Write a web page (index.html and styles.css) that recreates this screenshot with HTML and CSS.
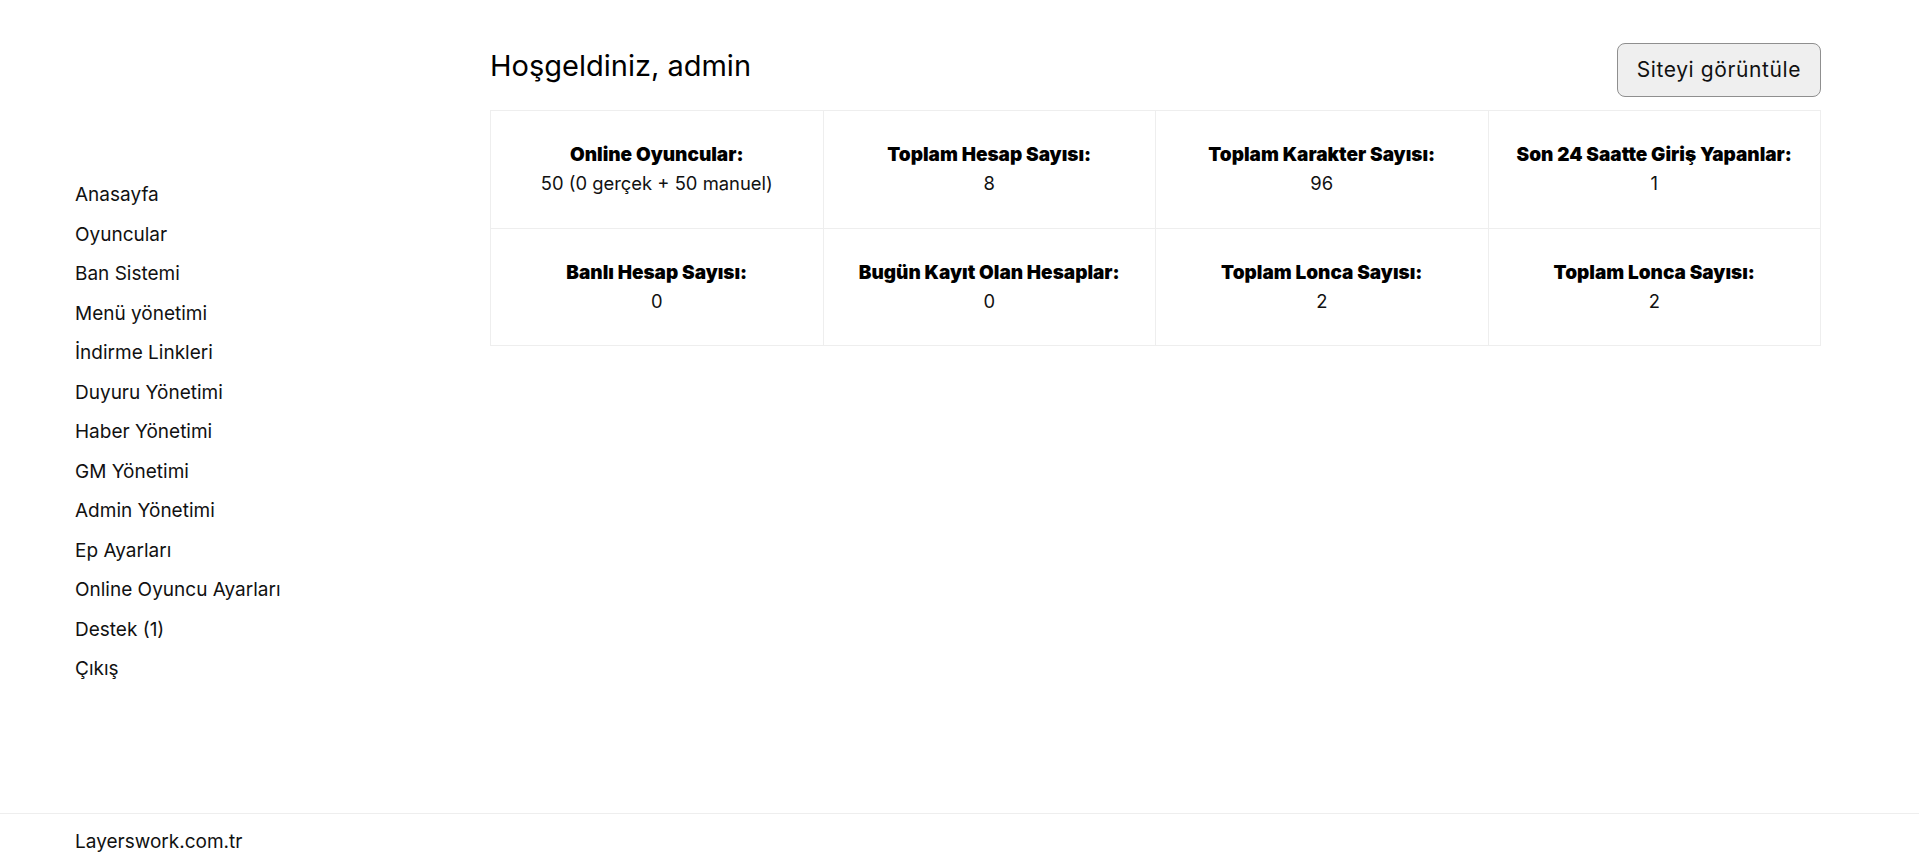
FILE: index.html
```html
<!DOCTYPE html>
<html lang="tr">
<head>
<meta charset="utf-8">
<title>Admin Panel</title>
<link rel="stylesheet" href="styles.css">
</head>
<body>
<div class="layout">
  <aside class="sidebar">
    <nav class="nav">
      <a href="#">Anasayfa</a>
      <a href="#">Oyuncular</a>
      <a href="#">Ban Sistemi</a>
      <a href="#">Menü yönetimi</a>
      <a href="#">İndirme Linkleri</a>
      <a href="#">Duyuru Yönetimi</a>
      <a href="#">Haber Yönetimi</a>
      <a href="#">GM Yönetimi</a>
      <a href="#">Admin Yönetimi</a>
      <a href="#">Ep Ayarları</a>
      <a href="#">Online Oyuncu Ayarları</a>
      <a href="#">Destek (1)</a>
      <a href="#">Çıkış</a>
    </nav>
  </aside>
  <main class="main">
    <div class="header">
      <h1 class="title">Hoşgeldiniz, admin</h1>
      <button class="btn" type="button">Siteyi görüntüle</button>
    </div>
    <div class="stats">
      <div class="cell"><strong>Online Oyuncular:</strong><span>50 (0 gerçek + 50 manuel)</span></div>
      <div class="cell"><strong>Toplam Hesap Sayısı:</strong><span>8</span></div>
      <div class="cell"><strong>Toplam Karakter Sayısı:</strong><span>96</span></div>
      <div class="cell"><strong>Son 24 Saatte Giriş Yapanlar:</strong><span>1</span></div>
      <div class="cell"><strong>Banlı Hesap Sayısı:</strong><span>0</span></div>
      <div class="cell"><strong>Bugün Kayıt Olan Hesaplar:</strong><span>0</span></div>
      <div class="cell"><strong>Toplam Lonca Sayısı:</strong><span>2</span></div>
      <div class="cell"><strong>Toplam Lonca Sayısı:</strong><span>2</span></div>
    </div>
  </main>
</div>
<footer class="footer">Layerswork.com.tr</footer>
</body>
</html>
```
FILE: styles.css
```css
* { box-sizing: border-box; }
html, body {
  margin: 0;
  padding: 0;
  background: #fff;
  color: #111;
  font-family: Inter, "Noto Sans", "Liberation Sans", sans-serif;
}
.layout {
  display: flex;
  min-height: 813px;
}
.sidebar {
  width: 490px;
  flex: none;
  padding: 175px 0 0 75px;
}
.nav {
  display: flex;
  flex-direction: column;
}
.nav a {
  color: #111;
  text-decoration: none;
  font-size: 19px;
  line-height: 39.5px;
}
.main {
  flex: 1;
  padding: 43px 98px 0 0;
}
.header {
  display: flex;
  justify-content: space-between;
  align-items: flex-start;
  margin-bottom: 13px;
}
.title {
  margin: 6px 0 0;
  font-size: 29px;
  font-weight: 400;
  line-height: 34px;
  color: #000;
}
.btn {
  font-family: inherit;
  font-size: 21px;
  line-height: 24px;
  padding: 14px 19px;
  background: #efefef;
  border: 1px solid #8f8f8f;
  border-radius: 8px;
  color: #111;
  letter-spacing: 0.6px;
}
.stats {
  display: grid;
  grid-template-columns: repeat(4, 1fr);
  border-top: 1px solid #eee;
  border-left: 1px solid #eee;
}
.cell {
  display: flex;
  flex-direction: column;
  align-items: center;
  text-align: center;
  padding: 30px 10px;
  border-right: 1px solid #eee;
  border-bottom: 1px solid #eee;
  font-size: 18.4px;
  line-height: 28px;
  height: 117.5px;
}
.cell strong {
  font-size: 19px;
  font-weight: 900;
  color: #000;
}
.footer {
  border-top: 1px solid #eee;
  padding: 15px 75px 20px;
  font-size: 19px;
  line-height: 26px;
  color: #111;
}
```
